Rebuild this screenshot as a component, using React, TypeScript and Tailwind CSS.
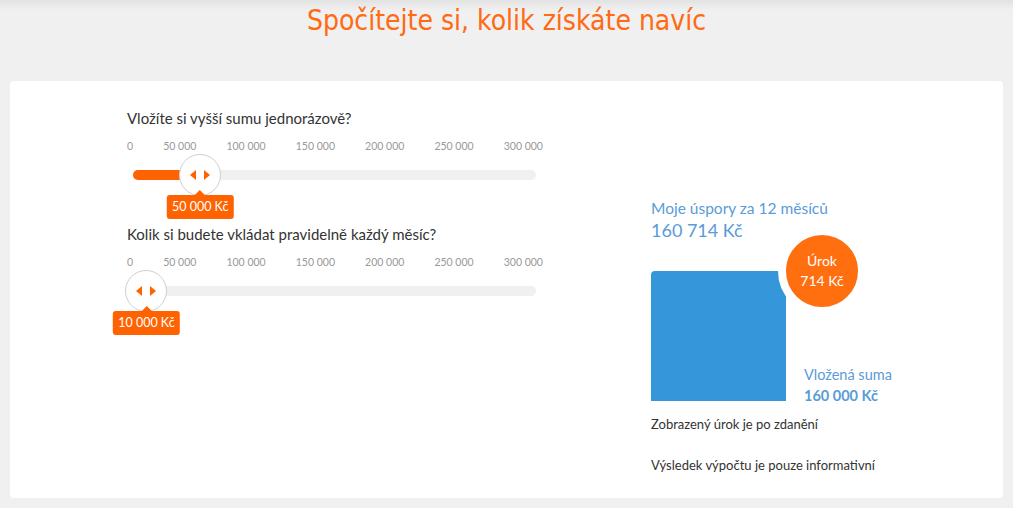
import { useState } from "react";

const TICKS = ["0", "50 000", "100 000", "150 000", "200 000", "250 000", "300 000"];
const MAX = 300000;

const formatKc = (value: number) =>
  value.toString().replace(/\B(?=(\d{3})+(?!\d))/g, " ") + " Kč";

function Slider({ label, value }: { label: string; value: number }) {
  const pct = (value / MAX) * 100;

  return (
    <div>
      <div className="text-[15px] leading-5 text-[#333]">{label}</div>
      <div className="mt-[11px] flex w-[416px] justify-between text-[10.5px] leading-[14px] text-[#999]">
        {TICKS.map((tick) => (
          <span key={tick}>{tick}</span>
        ))}
      </div>
      <div className="relative ml-[6px] mt-[17px] h-[10px] w-[403px] rounded-full bg-[#f0f0f0]">
        <div
          className="absolute left-0 top-0 h-full rounded-full bg-[#ff6200]"
          style={{ width: `${pct}%` }}
        />
        <div
          className="absolute top-1/2 flex h-[42px] w-[42px] -translate-x-1/2 -translate-y-1/2 items-center justify-center gap-[8px] rounded-full border border-[#cfcfcf] bg-white"
          style={{ left: `${pct}%` }}
        >
          <span className="h-0 w-0 border-y-[5px] border-r-[6px] border-y-transparent border-r-[#ff6200]" />
          <span className="h-0 w-0 border-y-[5px] border-l-[6px] border-y-transparent border-l-[#ff6200]" />
        </div>
        <div
          className="absolute top-[25px] -translate-x-1/2 whitespace-nowrap rounded-[3px] bg-[#ff6200] px-[5px] py-[3px] text-[12.5px] leading-[18px] text-white"
          style={{ left: `${pct}%` }}
        >
          <span className="absolute -top-[5px] left-1/2 h-0 w-0 -translate-x-1/2 border-x-[5px] border-b-[5px] border-x-transparent border-b-[#ff6200]" />
          {formatKc(value)}
        </div>
      </div>
    </div>
  );
}

export default function App() {
  const [oneTime] = useState(50000);
  const [monthly] = useState(10000);
  const deposited = oneTime + monthly * 11;
  const interest = 714;

  return (
    <div className="min-h-screen bg-[#f0f0f0] bg-gradient-to-b from-[#e2e2e2] to-[#f0f0f0] to-[10px] px-[10px] pb-[10px] font-['Lato',sans-serif]">
      <div className="h-[81px] pt-[3px] text-center">
        <h1 className="font-['DejaVu_Sans_Condensed','DejaVu_Sans',sans-serif] text-[28px] leading-[36px] text-[#ff6a13]">
          Spočítejte si, kolik získáte navíc
        </h1>
      </div>

      <div className="flex h-[417px] rounded-[4px] bg-white">
        <div className="w-[641px] pl-[117px] pt-[27px]">
          <Slider label="Vložíte si vyšší sumu jednorázově?" value={oneTime} />
          <div className="pt-[44px]">
            <Slider label="Kolik si budete vkládat pravidelně každý měsíc?" value={monthly} />
          </div>
        </div>

        <div className="pt-[117px]">
          <div className="text-[15.5px] leading-5 text-[#5a9bd8]">Moje úspory za 12 měsíců</div>
          <div className="text-[18px] leading-6 text-[#5a9bd8]">{formatKc(deposited + interest)}</div>

          <div className="mt-[29px] flex items-end">
            <div className="relative h-[130px] w-[135px] rounded-tl-[4px] bg-[#3597da]">
              <div className="absolute -right-[80px] -top-[44px] flex h-[88px] w-[88px] flex-col items-center justify-center rounded-full border-[8px] border-white bg-[#ff6e0f] text-[14px] leading-[20px] text-white">
                <span>Úrok</span>
                <span>{formatKc(interest)}</span>
              </div>
            </div>
            <div className="-mb-[5px] ml-[18px] text-[14.5px] leading-[21px] text-[#5a9bd8]">
              <div>Vložená suma</div>
              <div className="font-bold">{formatKc(deposited)}</div>
            </div>
          </div>

          <div className="mt-[14px] text-[13px] leading-[18px] text-[#333]">
            Zobrazený úrok je po zdanění
          </div>
          <div className="mt-[23px] text-[13px] leading-[18px] text-[#333]">
            Výsledek výpočtu je pouze informativní
          </div>
        </div>
      </div>
    </div>
  );
}
